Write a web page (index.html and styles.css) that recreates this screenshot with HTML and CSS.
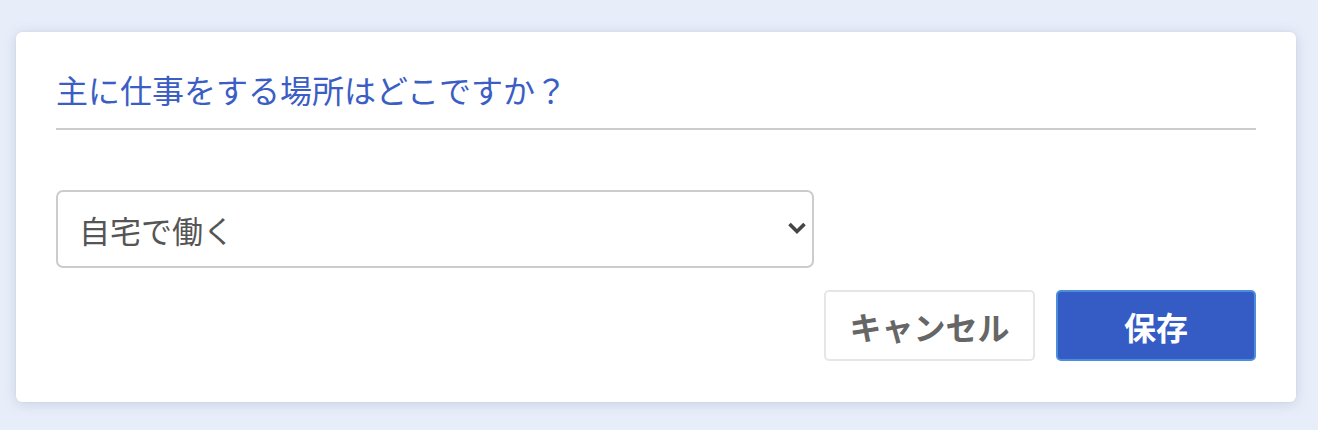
FILE: index.html
```html
<!DOCTYPE html>
<html lang="ja">
<head>
<meta charset="utf-8">
<title>勤務場所</title>
<link rel="stylesheet" href="styles.css">
</head>
<body>
<div class="page">
  <div class="card">
    <div class="card-header">
      <h2 class="title">主に仕事をする場所はどこですか？</h2>
    </div>
    <div class="select-wrap">
      <select class="select">
        <option>自宅で働く</option>
        <option>オフィスで働く</option>
      </select>
      <svg class="chevron" width="20" height="14" viewBox="0 0 20 14" aria-hidden="true">
        <path d="M2.5 3 L10 10.5 L17.5 3" fill="none" stroke="#454545" stroke-width="3.6" stroke-linecap="butt" stroke-linejoin="miter"/>
      </svg>
    </div>
    <div class="actions">
      <button class="btn btn-cancel" type="button">キャンセル</button>
      <button class="btn btn-save" type="button">保存</button>
    </div>
  </div>
</div>
</body>
</html>
```

FILE: styles.css
```css
html, body {
  margin: 0;
  padding: 0;
}
body {
  background: #e8eef9;
  font-family: "Noto Sans CJK JP", "Noto Sans", sans-serif;
  width: 1318px;
  height: 430px;
  overflow: hidden;
}
.page {
  padding: 32px 22px 0 16px;
}
.card {
  background: #ffffff;
  border-radius: 6px;
  box-shadow: 0 2px 14px rgba(40, 60, 110, 0.16), 0 0 2px rgba(40, 60, 110, 0.08);
  padding: 37px 40px 41px 40px;
}
.card-header {
  border-bottom: 2px solid #cccccc;
  padding-bottom: 19px;
}
.title {
  margin: 0;
  font-size: 32px;
  font-weight: 400;
  line-height: 40px;
  color: #3a5ec4;
  letter-spacing: 0;
}
.select-wrap {
  position: relative;
  margin-top: 60px;
  width: 758px;
  height: 78px;
}
.select {
  appearance: none;
  -webkit-appearance: none;
  box-sizing: border-box;
  width: 100%;
  height: 100%;
  border: 2px solid #cccccc;
  border-radius: 7px;
  background: #ffffff;
  padding: 0 60px 0 21px;
  font-family: "Noto Sans CJK JP", "Noto Sans", sans-serif;
  font-size: 31px;
  color: #555555;
  outline: none;
}
.chevron {
  position: absolute;
  right: 7px;
  top: 31px;
  pointer-events: none;
}
.actions {
  display: flex;
  justify-content: flex-end;
  gap: 21px;
  margin-top: 22px;
}
.btn {
  box-sizing: border-box;
  height: 71px;
  border-radius: 5px;
  font-family: "Noto Sans CJK JP", "Noto Sans", sans-serif;
  font-size: 32px;
  font-weight: 700;
  cursor: pointer;
  padding: 0;
}
.btn-cancel {
  width: 211px;
  background: #ffffff;
  border: 2px solid #e6e6e6;
  color: #666666;
}
.btn-save {
  width: 200px;
  background: #355cc4;
  border: 2px solid #4b8fdc;
  color: #ffffff;
}
```
